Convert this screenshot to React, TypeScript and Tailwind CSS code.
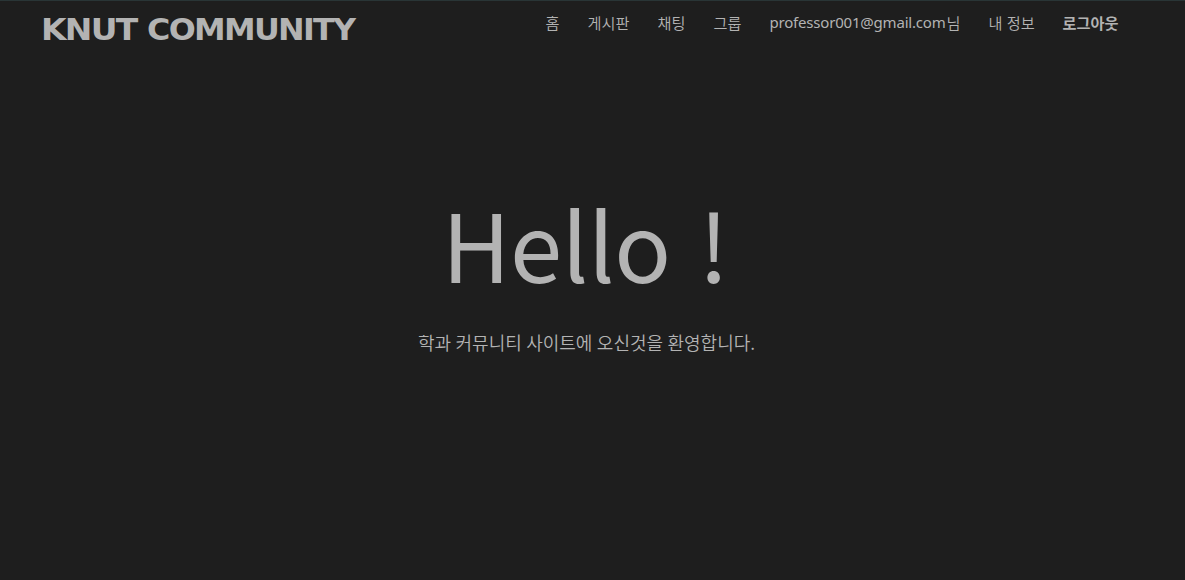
const items = [
  { label: '홈', cls: 'w-[14px]' },
  { label: '게시판', cls: 'w-[42px]' },
  { label: '채팅', cls: 'w-[28px]' },
  { label: '그룹', cls: 'w-[28px]' },
];

export default function App() {
  return (
    <div className="flex h-[580px] w-full flex-col overflow-hidden border-t border-[#293536] bg-[#1e1e1e] font-['Noto_Sans_CJK_KR',sans-serif] text-[#b3b3b3]">
      <header className="flex h-14 shrink-0 items-start justify-between pl-[40.5px] pr-[66.5px]">
        <a href="#" className="mt-[10px] flex h-10 w-[316px] whitespace-nowrap font-['DejaVu_Sans',sans-serif] text-[30px] leading-[38px] font-bold tracking-[-1.6px]">
          <span className="w-[106px] origin-left scale-x-[1.1]">KNUT</span>
          <span className="origin-left scale-x-[1.06]">COMMUNITY</span>
        </a>
        <nav className="mt-[10px] flex gap-[28px] whitespace-nowrap text-[15.2px] leading-[22px] font-[350]">
          {items.map((item) => (
            <a key={item.label} href="#" className={item.cls}>{item.label}</a>
          ))}
          <a href="#" className="flex w-[191px]">
            <span className="w-[177px] font-['Noto_Sans',sans-serif] text-[15px] font-normal tracking-[-0.2px]">professor001@gmail.com</span>
            <span>님</span>
          </a>
          <a href="#" className="w-[46px] [word-spacing:1px]">내 정보</a>
          <a href="#" className="w-[56px] font-bold">로그아웃</a>
        </nav>
      </header>
      <main className="flex flex-col items-start">
        <h1 className="mt-[117px] ml-[442px] whitespace-nowrap text-[94px] leading-[136px] font-normal tracking-[-0.4px] [word-spacing:7px]">Hello !</h1>
        <p className="mt-[19px] ml-[418px] whitespace-nowrap text-[18px] leading-[26px] font-[350] [word-spacing:0.4px]">학과 커뮤니티 사이트에 오신것을 환영합니다.</p>
      </main>
    </div>
  );
}
